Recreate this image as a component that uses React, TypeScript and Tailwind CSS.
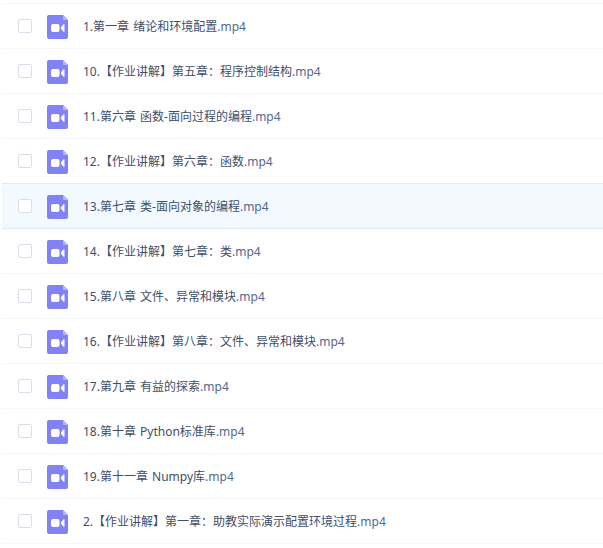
const FILES = [
  "1.第一章 绪论和环境配置",
  "10.【作业讲解】第五章：程序控制结构",
  "11.第六章 函数-面向过程的编程",
  "12.【作业讲解】第六章：函数",
  "13.第七章 类-面向对象的编程",
  "14.【作业讲解】第七章：类",
  "15.第八章 文件、异常和模块",
  "16.【作业讲解】第八章：文件、异常和模块",
  "17.第九章 有益的探索",
  "18.第十章 Python标准库",
  "19.第十一章 Numpy库",
  "2.【作业讲解】第一章：助教实际演示配置环境过程",
];

function VideoIcon() {
  return (
    <svg width="21" height="24" viewBox="0 0 21 24" className="block">
      <path d="M2 0h14l5 5v17a2 2 0 0 1-2 2H2a2 2 0 0 1-2-2V2a2 2 0 0 1 2-2z" fill="#8183f4" />
      <path d="M16 0l5 5h-4a1 1 0 0 1-1-1z" fill="#b3b5f8" />
      <rect x="4" y="9" width="8.5" height="8" rx="2" fill="#fff" />
      <path d="M14 12.2l2.6-2.9a.5.5 0 0 1 .9.3v6.8a.5.5 0 0 1-.9.3L14 13.8z" fill="#fff" />
    </svg>
  );
}

export default function App() {
  return (
    <div className="w-[603px] h-[548px] overflow-hidden bg-white pl-[2px] pt-[3px] font-['Noto_Sans','Noto_Sans_CJK_SC',sans-serif]">
      <div className="border-t border-[#f2f6fd]">
        {FILES.map((name, i) => (
          <div
            key={name}
            className={`flex items-center h-[45px] border-b ${
              i === 3 || i === 4 ? "border-[#dcecfb]" : "border-[#f2f6fd]"
            } ${i === 4 ? "bg-[#f3faff]" : ""}`}
          >
            <span className="ml-[16px] w-[14px] h-[14px] rounded-[2px] border border-[#d8dfea] bg-white shrink-0" />
            <span className="ml-[15px] pt-[2px] shrink-0">
              <VideoIcon />
            </span>
            <span className="ml-[15px] pt-[2px] text-[12px] text-[#424e67] whitespace-nowrap [word-spacing:1px]">
              {name}
              <span className="text-[#54678f]">.mp4</span>
            </span>
          </div>
        ))}
      </div>
    </div>
  );
}
